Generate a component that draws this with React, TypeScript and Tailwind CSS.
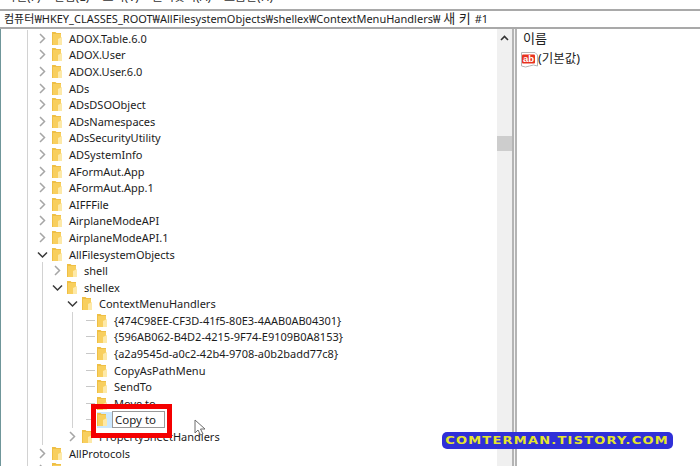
const FONT = "font-['Noto_Sans','Noto_Sans_CJK_KR',sans-serif]";

type Row = {
  label: string;
  cells: ("" | "line" | "open" | "closed" | "tee")[];
  mode?: "edit";
};

const l = "line" as const;
const rows: Row[] = [
  ...[
    "ADOX.Table.6.0", "ADOX.User", "ADOX.User.6.0", "ADs", "ADsDSOObject", "ADsNamespaces",
    "ADsSecurityUtility", "ADSystemInfo", "AFormAut.App", "AFormAut.App.1", "AIFFFile",
    "AirplaneModeAPI", "AirplaneModeAPI.1",
  ].map((label) => ({ label, cells: [l, "closed"] as Row["cells"] })),
  { label: "AllFilesystemObjects", cells: [l, "open"] },
  { label: "shell", cells: [l, l, "closed"] },
  { label: "shellex", cells: [l, l, "open"] },
  { label: "ContextMenuHandlers", cells: [l, l, "", "open"] },
  { label: "{474C98EE-CF3D-41f5-80E3-4AAB0AB04301}", cells: [l, l, "", l, "tee"] },
  { label: "{596AB062-B4D2-4215-9F74-E9109B0A8153}", cells: [l, l, "", l, "tee"] },
  { label: "{a2a9545d-a0c2-42b4-9708-a0b2badd77c8}", cells: [l, l, "", l, "tee"] },
  { label: "CopyAsPathMenu", cells: [l, l, "", l, "tee"] },
  { label: "SendTo", cells: [l, l, "", l, "tee"] },
  { label: "Move to", cells: [l, l, "", l, "tee"] },
  { label: "Copy to", cells: [l, l, "", l, "tee"], mode: "edit" },
  { label: "PropertySheetHandlers", cells: [l, l, "", "closed"] },
  { label: "AllProtocols", cells: [l, "closed"] },
  { label: "AllSyncRootManager", cells: [l, "closed"] },
];

function Folder() {
  return (
    <svg width="10" height="15" viewBox="0 0 10 15" className="shrink-0">
      <path d="M0 1h3.500l1 1H9v12H0z" fill="#efbf45" />
      <path d="M1 3h8v11H1z" fill="#f8cf5e" />
      <path d="M6 8l4-2v8H6z" fill="#fde9a8" />
    </svg>
  );
}

function Chevron({ open }: { open: boolean }) {
  return (
    <svg width="11" height="11" viewBox="0 0 11 11" fill="none" stroke={open ? "#3a3a3a" : "#a6a6a6"} strokeWidth="1.5">
      {open ? <path d="M1 3.500l4.500 4.500L10 3.500" /> : <path d="M3 1l4.500 4.500L3 10" />}
    </svg>
  );
}

function Cell({ kind }: { kind: Row["cells"][number] }) {
  return (
    <div className="relative flex h-full w-[15px] shrink-0 items-center justify-center">
      {kind === "line" && <div className="h-full w-px bg-[#d2d2d2]" />}
      {kind === "tee" && <div className="ml-[6px] h-px w-[9px] bg-[#c8c8c8]" />}
      {kind === "closed" && <Chevron open={false} />}
      {kind === "open" && <Chevron open />}
    </div>
  );
}

function TreeRow({ row }: { row: Row }) {
  return (
    <div className="flex h-[16.6px] shrink-0 items-center whitespace-nowrap pl-[19px] text-[11px] leading-none text-[#1c1c1c]">
      {row.cells.map((c, i) => (
        <Cell key={i} kind={c} />
      ))}
      {row.mode === "edit" ? (
        <div className="ml-[2px] flex h-[16.6px] items-center">
          <div className="flex h-full w-[15px] items-center bg-[#cce8ff]">
            <Folder />
          </div>
          <div className="flex h-[17px] w-[53px] items-center border border-[#9a9a9a] bg-white pl-[2px] text-[11.5px]">
            {row.label}
          </div>
        </div>
      ) : (
        <>
          <div className="ml-[2px] mr-[7px]">
            <Folder />
          </div>
          <span>{row.label}</span>
        </>
      )}
    </div>
  );
}

export default function App() {
  return (
    <div className={`${FONT} relative flex h-[466px] w-[700px] flex-col overflow-hidden bg-white`}>
      <div className="h-[9px] shrink-0 overflow-hidden bg-white">
        <div className="-mt-[11px] flex gap-[13px] whitespace-nowrap pl-[5px] text-[12px] leading-[16px] text-[#333]">
          <span>파일(F)</span>
          <span>편집(E)</span>
          <span>보기(V)</span>
          <span>즐겨찾기(A)</span>
          <span>도움말(H)</span>
        </div>
      </div>
      <div className="flex h-[20px] shrink-0 items-center whitespace-nowrap border-y-2 border-[#a9a9a9] bg-white pl-[4px] text-[11px] text-[#1c1c1c]">
        <span>컴퓨터</span>
        <span>₩HKEY_CLASSES_ROOT₩AllFilesystemObjects₩shellex₩ContextMenuHandlers₩</span>
        <span className="ml-[3px] text-[13px]">새 키</span>
        <span className="ml-[4px]">#1</span>
      </div>
      <div className="flex min-h-0 flex-1 border-l border-[#6f969a]">
        <div className="flex w-[496px] shrink-0 flex-col overflow-hidden pt-[1px]">
          {rows.map((r) => (
            <TreeRow key={r.label} row={r} />
          ))}
        </div>
        <div className="flex w-[15px] shrink-0 flex-col bg-[#f0f0f0]">
          <div className="flex h-[17px] items-center justify-center">
            <svg width="9" height="6" viewBox="0 0 9 6" fill="none" stroke="#333" strokeWidth="1.600">
              <path d="M1 5l3.500-3.500L8 5" />
            </svg>
          </div>
          <div className="mt-[90px] h-[15px] bg-[#cdcdcd]" />
        </div>
        <div className="w-[5px] shrink-0 border-x-2 border-[#b4b4b4] bg-[#f4f4f4]" />
        <div className="flex flex-1 flex-col pl-[4px] text-[12px] text-[#222]">
          <div className="h-[18px] pl-[2px] text-[13px] leading-[18px]">이름</div>
          <div className="mt-[3px] flex items-center">
            <svg width="17" height="17" viewBox="0 0 17 17" className="shrink-0">
              <path d="M.5 1.500H14l2.500 2.500V15q-4-2-8 0t-8 0z" fill="#fff" stroke="#b5b5b5" />
              <rect x="1" y="3.500" width="13" height="9" rx="1" fill="#e8321e" />
              <text x="2" y="11" fontSize="9.500" fontWeight="700" fill="#fff" fontFamily="Liberation Sans">ab</text>
            </svg>
            <span className="text-[12.5px]">(기본값)</span>
          </div>
        </div>
      </div>

      <div className="absolute left-[91px] top-[404px] h-[34px] w-[81px] border-[5px] border-[#f40000]" />

      <svg width="13" height="17" viewBox="0 0 13 17" className="absolute left-[194px] top-[419px]">
        <path d="M1 1v13l3-3 2.500 5 2.500-1-2.500-5H11z" fill="#fff" stroke="#6d6d6d" />
      </svg>

      <div className="absolute left-[442px] top-[432px] flex h-[17px] w-[231px] items-center justify-center whitespace-nowrap rounded-[5px] bg-[#3030d8] font-['DejaVu_Sans',sans-serif] text-[10px] font-bold tracking-[0.94px] text-[#e6e62a]">
        <span className="scale-x-[1.3]">COMTERMAN.TISTORY.COM</span>
      </div>
    </div>
  );
}
